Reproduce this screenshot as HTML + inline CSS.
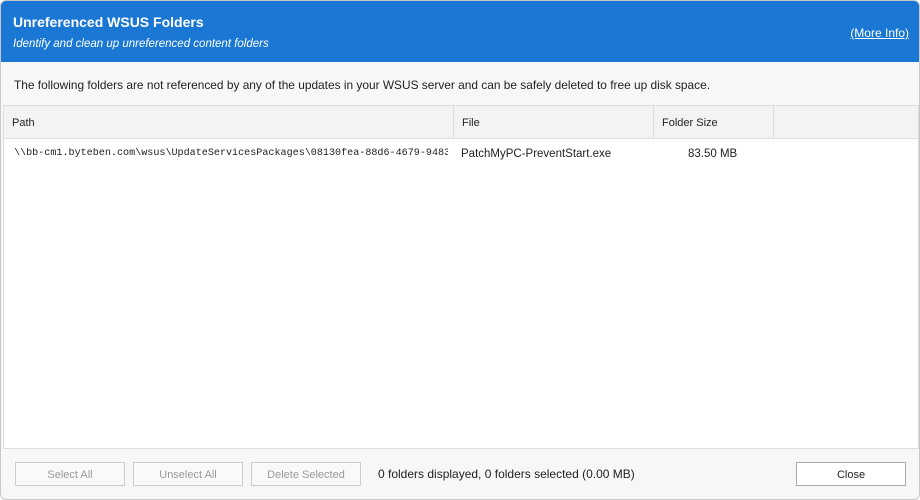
<!DOCTYPE html>
<html><head><style>
body{margin:0;width:920px;height:500px;overflow:hidden;background:#fff;font-family:"Liberation Sans",sans-serif;}
.win{position:absolute;left:0;top:0;width:918px;height:498px;border:1px solid #c8c8c8;border-radius:6px;background:#f7f7f7;overflow:hidden}
.hdr{position:absolute;left:0;top:0;width:918px;height:61px;background:#1a77d3;color:#fff}
.t1{position:absolute;left:12px;top:13px;font-size:14px;font-weight:bold}
.t2{position:absolute;left:12px;top:37px;font-size:11.5px;font-style:italic}
.mi{position:absolute;right:10px;top:25px;font-size:12px;text-decoration:underline}
.desc{position:absolute;left:13px;top:77px;font-size:11.9px;color:#222}
.grid{position:absolute;left:2px;top:104px;width:914px;height:342px;background:#fff;border:1px solid #ddd}
.gh{position:absolute;left:0;top:0;width:914px;height:32px;background:#f3f3f3;border-bottom:1px solid #e0e0e0;font-size:11px;color:#222}
.gh div{position:absolute;top:0;height:32px;line-height:34px;padding-left:8px;border-right:1px solid #ddd;box-sizing:border-box}
.row{position:absolute;top:42px;font-size:11.5px;color:#222}
.btn{position:absolute;top:461px;height:24px;border:1px solid #ccc;background:#f9f9f9;color:#999;font-size:11px;text-align:center;line-height:24px;box-sizing:border-box}
</style></head><body>
<div class="win">
<div class="hdr"><div class="t1">Unreferenced WSUS Folders</div><div class="t2">Identify and clean up unreferenced content folders</div><div class="mi">(More Info)</div></div>
<div class="desc">The following folders are not referenced by any of the updates in your WSUS server and can be safely deleted to free up disk space.</div>
<div class="grid">
<div class="gh"><div style="left:0;width:450px">Path</div><div style="left:450px;width:200px">File</div><div style="left:650px;width:120px">Folder Size</div></div>
<div class="row" style="left:10px;font-family:'Liberation Mono',monospace;font-size:10.1px;width:434px;overflow:hidden;white-space:nowrap">\\bb-cm1.byteben.com\wsus\UpdateServicesPackages\08130fea-88d6-4679-9483</div>
<div class="row" style="left:457px">PatchMyPC-PreventStart.exe</div>
<div class="row" style="left:684px">83.50 MB</div>
</div>
<div class="btn" style="left:14px;width:110px">Select All</div>
<div class="btn" style="left:132px;width:110px">Unselect All</div>
<div class="btn" style="left:250px;width:110px">Delete Selected</div>
<div style="position:absolute;left:377px;top:466px;font-size:12px;color:#222">0 folders displayed, 0 folders selected (0.00 MB)</div>
<div class="btn" style="left:795px;width:110px;color:#222;background:#fff;border-color:#aaa">Close</div>
</div>
</body></html>
